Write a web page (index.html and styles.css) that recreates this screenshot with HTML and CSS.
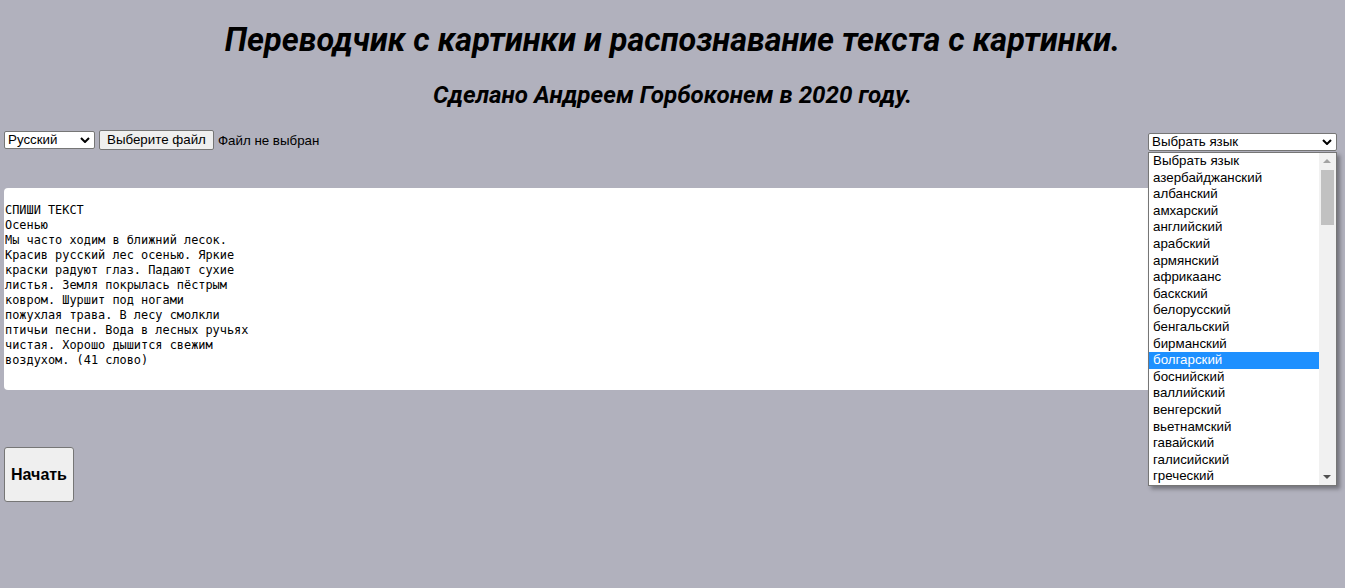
FILE: index.html
```html
<!DOCTYPE html>
<html lang="ru">
<head>
<meta charset="utf-8">
<title>Переводчик с картинки</title>
<link rel="stylesheet" href="styles.css">
</head>
<body>
<h1 class="title">Переводчик с картинки и распознавание текста с картинки.</h1>
<h2 class="subtitle">Сделано Андреем Горбоконем в 2020 году.</h2>
<div class="controls">
  <div class="left">
    <div class="select src">Русский<svg class="chev" viewBox="0 0 10 6" width="10" height="6"><path d="M1 1l4 4 4-4" fill="none" stroke="#000" stroke-width="2"/></svg></div>
    <div class="filebtn">Выберите файл</div>
    <span class="filename">Файл не выбран</span>
  </div>
  <div class="right">
    <div class="select lang">Выбрать язык<svg class="chev" viewBox="0 0 10 6" width="10" height="6"><path d="M1 1l4 4 4-4" fill="none" stroke="#000" stroke-width="2"/></svg></div>
    <div class="popup">
      <ul class="options">
        <li>Выбрать язык</li>
        <li>азербайджанский</li>
        <li>албанский</li>
        <li>амхарский</li>
        <li>английский</li>
        <li>арабский</li>
        <li>армянский</li>
        <li>африкаанс</li>
        <li>баскский</li>
        <li>белорусский</li>
        <li>бенгальский</li>
        <li>бирманский</li>
        <li class="active">болгарский</li>
        <li>боснийский</li>
        <li>валлийский</li>
        <li>венгерский</li>
        <li>вьетнамский</li>
        <li>гавайский</li>
        <li>галисийский</li>
        <li>греческий</li>
      </ul>
      <div class="scrollbar">
        <div class="arrow up"></div>
        <div class="track"><div class="thumb"></div></div>
        <div class="arrow down"></div>
      </div>
    </div>
  </div>
</div>
<div class="textbox">СПИШИ ТЕКСТ
Осенью
Мы часто ходим в ближний лесок.
Красив русский лес осенью. Яркие
краски радуют глаз. Падают сухие
листья. Земля покрылась пёстрым
ковром. Шуршит под ногами
пожухлая трава. В лесу смолкли
птичьи песни. Вода в лесных ручьях
чистая. Хорошо дышится свежим
воздухом. (41 слово)</div>
<button class="start">Начать</button>
</body>
</html>
```

FILE: styles.css
```css
html, body {
  margin: 0;
  padding: 0;
}
body {
  background: #b1b1bd;
  font-family: "Liberation Sans", Arial, sans-serif;
  color: #000;
  padding: 8px 4px;
}
.title {
  font-family: Roboto, "Liberation Sans", sans-serif;
  font-style: italic;
  font-weight: 700;
  font-size: 32.4px;
  text-align: center;
  margin: 14px 0 0;
  line-height: 37px;
}
.subtitle {
  font-family: Roboto, "Liberation Sans", sans-serif;
  font-style: italic;
  font-weight: 700;
  font-size: 24.2px;
  text-align: center;
  margin: 22px 0 0;
  line-height: 28px;
}
.controls {
  display: flex;
  justify-content: space-between;
  align-items: flex-start;
  margin-top: 22px;
  position: relative;
  z-index: 2;
  padding-right: 4px;
}
.left {
  display: flex;
  align-items: center;
  gap: 4px;
  font-size: 13.33px;
  margin-top: -1px;
}
.select {
  position: relative;
  box-sizing: border-box;
  background: #fff;
  border: 1px solid #767676;
  border-radius: 2px;
  height: 18px;
  line-height: 16px;
  padding: 0 18px 0 3px;
  font-size: 13.33px;
  color: #000;
  white-space: nowrap;
}
.select .chev {
  position: absolute;
  right: 4px;
  top: 5px;
}
.src {
  width: 91px;
}
.filebtn {
  box-sizing: border-box;
  height: 20px;
  line-height: 18px;
  padding: 0 7px;
  background: #efefef;
  border: 1px solid #767676;
  border-radius: 2px;
  font-size: 13.33px;
}
.filename {
  font-size: 13.33px;
}
.right {
  position: relative;
  width: 189px;
  margin-top: 2px;
}
.lang {
  width: 189px;
}
.popup {
  position: absolute;
  top: 19px;
  left: 0;
  width: 189px;
  box-sizing: border-box;
  background: #fff;
  border: 1px solid #767676;
  box-shadow: 3px 3px 4px rgba(0, 0, 0, 0.35);
  display: flex;
}
.options {
  list-style: none;
  margin: 0;
  padding: 0;
  flex: 1;
}
.options li {
  height: 16.6px;
  line-height: 16.6px;
  padding-left: 4px;
  font-size: 13.33px;
  white-space: nowrap;
}
.options li.active {
  background: #1e90ff;
  color: #fff;
}
.scrollbar {
  width: 17px;
  background: #f1f1f1;
  display: flex;
  flex-direction: column;
}
.arrow {
  height: 17px;
  position: relative;
}
.arrow.up::after,
.arrow.down::after {
  content: "";
  position: absolute;
  left: 4px;
  width: 0;
  height: 0;
  border-left: 4px solid transparent;
  border-right: 4px solid transparent;
}
.arrow.up::after {
  top: 6px;
  border-bottom: 4px solid #a3a3a3;
}
.arrow.down::after {
  top: 7px;
  border-top: 4px solid #505050;
}
.track {
  flex: 1;
  padding: 0 2px;
}
.thumb {
  height: 55px;
  background: #c1c1c1;
}
.textbox {
  position: relative;
  z-index: 1;
  box-sizing: border-box;
  margin-top: 37px;
  width: 1333px;
  height: 202px;
  background: #fff;
  border-radius: 4px;
  padding: 15px 1px;
  font-family: "DejaVu Sans Mono", monospace;
  font-size: 11.9px;
  line-height: 15px;
  white-space: pre;
}
.start {
  display: block;
  margin-top: 57px;
  width: 70px;
  height: 55px;
  background: #efefef;
  border: 1px solid #767676;
  border-radius: 3px;
  font-family: "Liberation Sans", Arial, sans-serif;
  font-weight: 700;
  font-size: 16px;
  color: #000;
  padding: 0;
}
```
